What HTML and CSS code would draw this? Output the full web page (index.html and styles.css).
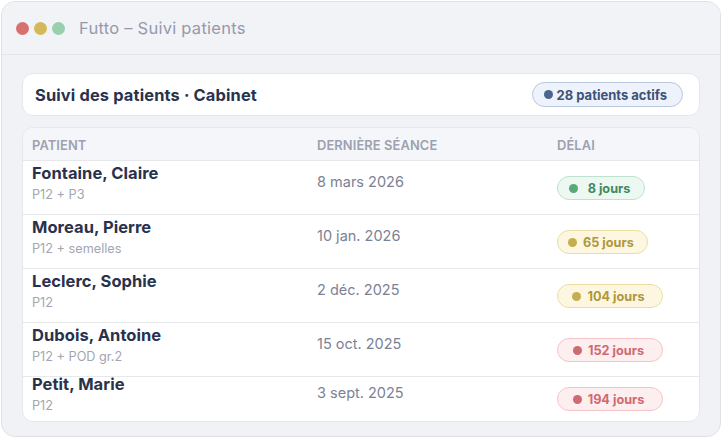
FILE: index.html
```html
<!DOCTYPE html>
<html lang="fr">
<head>
<meta charset="utf-8">
<title>Futto – Suivi patients</title>
<link rel="stylesheet" href="styles.css">
</head>
<body>
<div class="window">
  <div class="titlebar">
    <span class="light red"></span>
    <span class="light yellow"></span>
    <span class="light green"></span>
    <span class="title">Futto – Suivi patients</span>
  </div>
  <div class="main">
    <div class="head-card">
      <div class="head-title">Suivi des patients · Cabinet</div>
      <div class="count"><span class="dot"></span>28 patients actifs</div>
    </div>
    <div class="table">
      <div class="thead">
        <div>Patient</div>
        <div>Dernière séance</div>
        <div>Délai</div>
      </div>
      <div class="row">
        <div class="who"><div class="name">Fontaine, Claire</div><div class="sub">P12 + P3</div></div>
        <div class="date">8 mars 2026</div>
        <div class="cell-pill"><span class="pill ok"><span class="dot"></span><span class="txt pad">8 jours</span></span></div>
      </div>
      <div class="row">
        <div class="who"><div class="name">Moreau, Pierre</div><div class="sub">P12 + semelles</div></div>
        <div class="date">10 jan. 2026</div>
        <div class="cell-pill"><span class="pill warn"><span class="dot"></span><span class="txt">65 jours</span></span></div>
      </div>
      <div class="row">
        <div class="who"><div class="name">Leclerc, Sophie</div><div class="sub">P12</div></div>
        <div class="date">2 déc. 2025</div>
        <div class="cell-pill"><span class="pill warn wide"><span class="dot"></span><span class="txt">104 jours</span></span></div>
      </div>
      <div class="row">
        <div class="who"><div class="name">Dubois, Antoine</div><div class="sub">P12 + POD gr.2</div></div>
        <div class="date">15 oct. 2025</div>
        <div class="cell-pill"><span class="pill late wide"><span class="dot"></span><span class="txt">152 jours</span></span></div>
      </div>
      <div class="row last">
        <div class="who"><div class="name">Petit, Marie</div><div class="sub">P12</div></div>
        <div class="date">3 sept. 2025</div>
        <div class="cell-pill"><span class="pill late wide"><span class="dot"></span><span class="txt">194 jours</span></span></div>
      </div>
    </div>
  </div>
</div>
</body>
</html>
```

FILE: styles.css
```css
* { box-sizing: border-box; margin: 0; padding: 0; }
html, body { background: #ffffff; }
body {
  padding: 1px;
  font-family: Inter, "Liberation Sans", sans-serif;
}
.window {
  width: 720px;
  height: 436px;
  background: #f1f2f6;
  border: 1px solid #dfe1e6;
  border-radius: 14px;
  overflow: hidden;
  display: flex;
  flex-direction: column;
}
.titlebar {
  height: 53px;
  flex: none;
  display: flex;
  align-items: center;
  padding-left: 14px;
  gap: 5px;
  border-bottom: 1px solid #e3e5ea;
  background: #f2f3f7;
}
.light {
  width: 13px;
  height: 13px;
  border-radius: 50%;
  display: block;
}
.light.red { background: #d7716f; }
.light.yellow { background: #d3b95b; }
.light.green { background: #99cfad; }
.title {
  margin-left: 9px;
  font-size: 16.5px;
  color: #959aab;
  letter-spacing: 0.25px;
}
.main {
  padding: 18px 20px 0 20px;
  display: flex;
  flex-direction: column;
  gap: 11px;
}
.head-card {
  height: 43px;
  background: #ffffff;
  border: 1px solid #e5e7ec;
  border-radius: 11px;
  display: flex;
  align-items: center;
  justify-content: space-between;
  padding: 0 16px 0 12px;
}
.head-title {
  font-size: 16.4px;
  font-weight: 700;
  color: #28324c;
  letter-spacing: 0.15px;
}
.count {
  height: 25px;
  display: flex;
  align-items: center;
  gap: 4px;
  padding: 0 15px 0 11px;
  background: #edf2fb;
  border: 1px solid #b9c7de;
  border-radius: 13px;
  font-size: 13px;
  font-weight: 700;
  color: #3d5279;
}
.count .dot {
  width: 9px;
  height: 9px;
  border-radius: 50%;
  background: #4b6490;
}
.table {
  height: 295px;
  background: #ffffff;
  border: 1px solid #e5e7ec;
  border-radius: 11px;
  overflow: hidden;
}
.thead, .row {
  display: grid;
  grid-template-columns: 285px 240px 1fr;
  padding-left: 9px;
}
.thead {
  height: 32px;
  align-items: center;
  padding-top: 2px;
  background: #f5f6f9;
  font-size: 12.9px;
  font-weight: 600;
  text-transform: uppercase;
  color: #9ca1b0;
  letter-spacing: 0.1px;
}
.row {
  height: 54px;
  border-top: 1px solid #e6e8ec;
  align-items: start;
  padding-top: 5px;
}
.row.last {
  height: 45px;
  padding-top: 0;
}
.name {
  font-size: 16.5px;
  line-height: 14px;
  font-weight: 700;
  color: #28324c;
  letter-spacing: 0.05px;
}
.sub {
  margin-top: 7px;
  font-size: 12.7px;
  line-height: 16px;
  color: #a2a6b0;
}
.date {
  margin-top: 6px;
  font-size: 14.5px;
  line-height: 20px;
  color: #7b8295;
}
.cell-pill { margin-top: 10px; display: flex; }
.pill {
  height: 24px;
  min-width: 88px;
  display: inline-flex;
  align-items: center;
  justify-content: center;
  gap: 6px;
  padding: 0 13px 0 10px;
  border: 1px solid;
  border-radius: 12px;
  font-size: 12.7px;
  font-weight: 700;
}
.pill.wide { min-width: 106px; }
.pill .dot {
  width: 9px;
  height: 9px;
  border-radius: 50%;
}
.pill .txt.pad { padding-left: 4px; }
.pill.ok { background: #edf8f3; border-color: #bde2cd; color: #3f8a5c; }
.pill.ok .dot { background: #5aa877; }
.pill.warn { background: #fdf7e2; border-color: #ecdda3; color: #ae983a; }
.pill.warn .dot { background: #c4ae4f; }
.pill.late { background: #fdeeef; border-color: #f4c5c7; color: #cf6a70; }
.pill.late .dot { background: #cc6b71; }
```
